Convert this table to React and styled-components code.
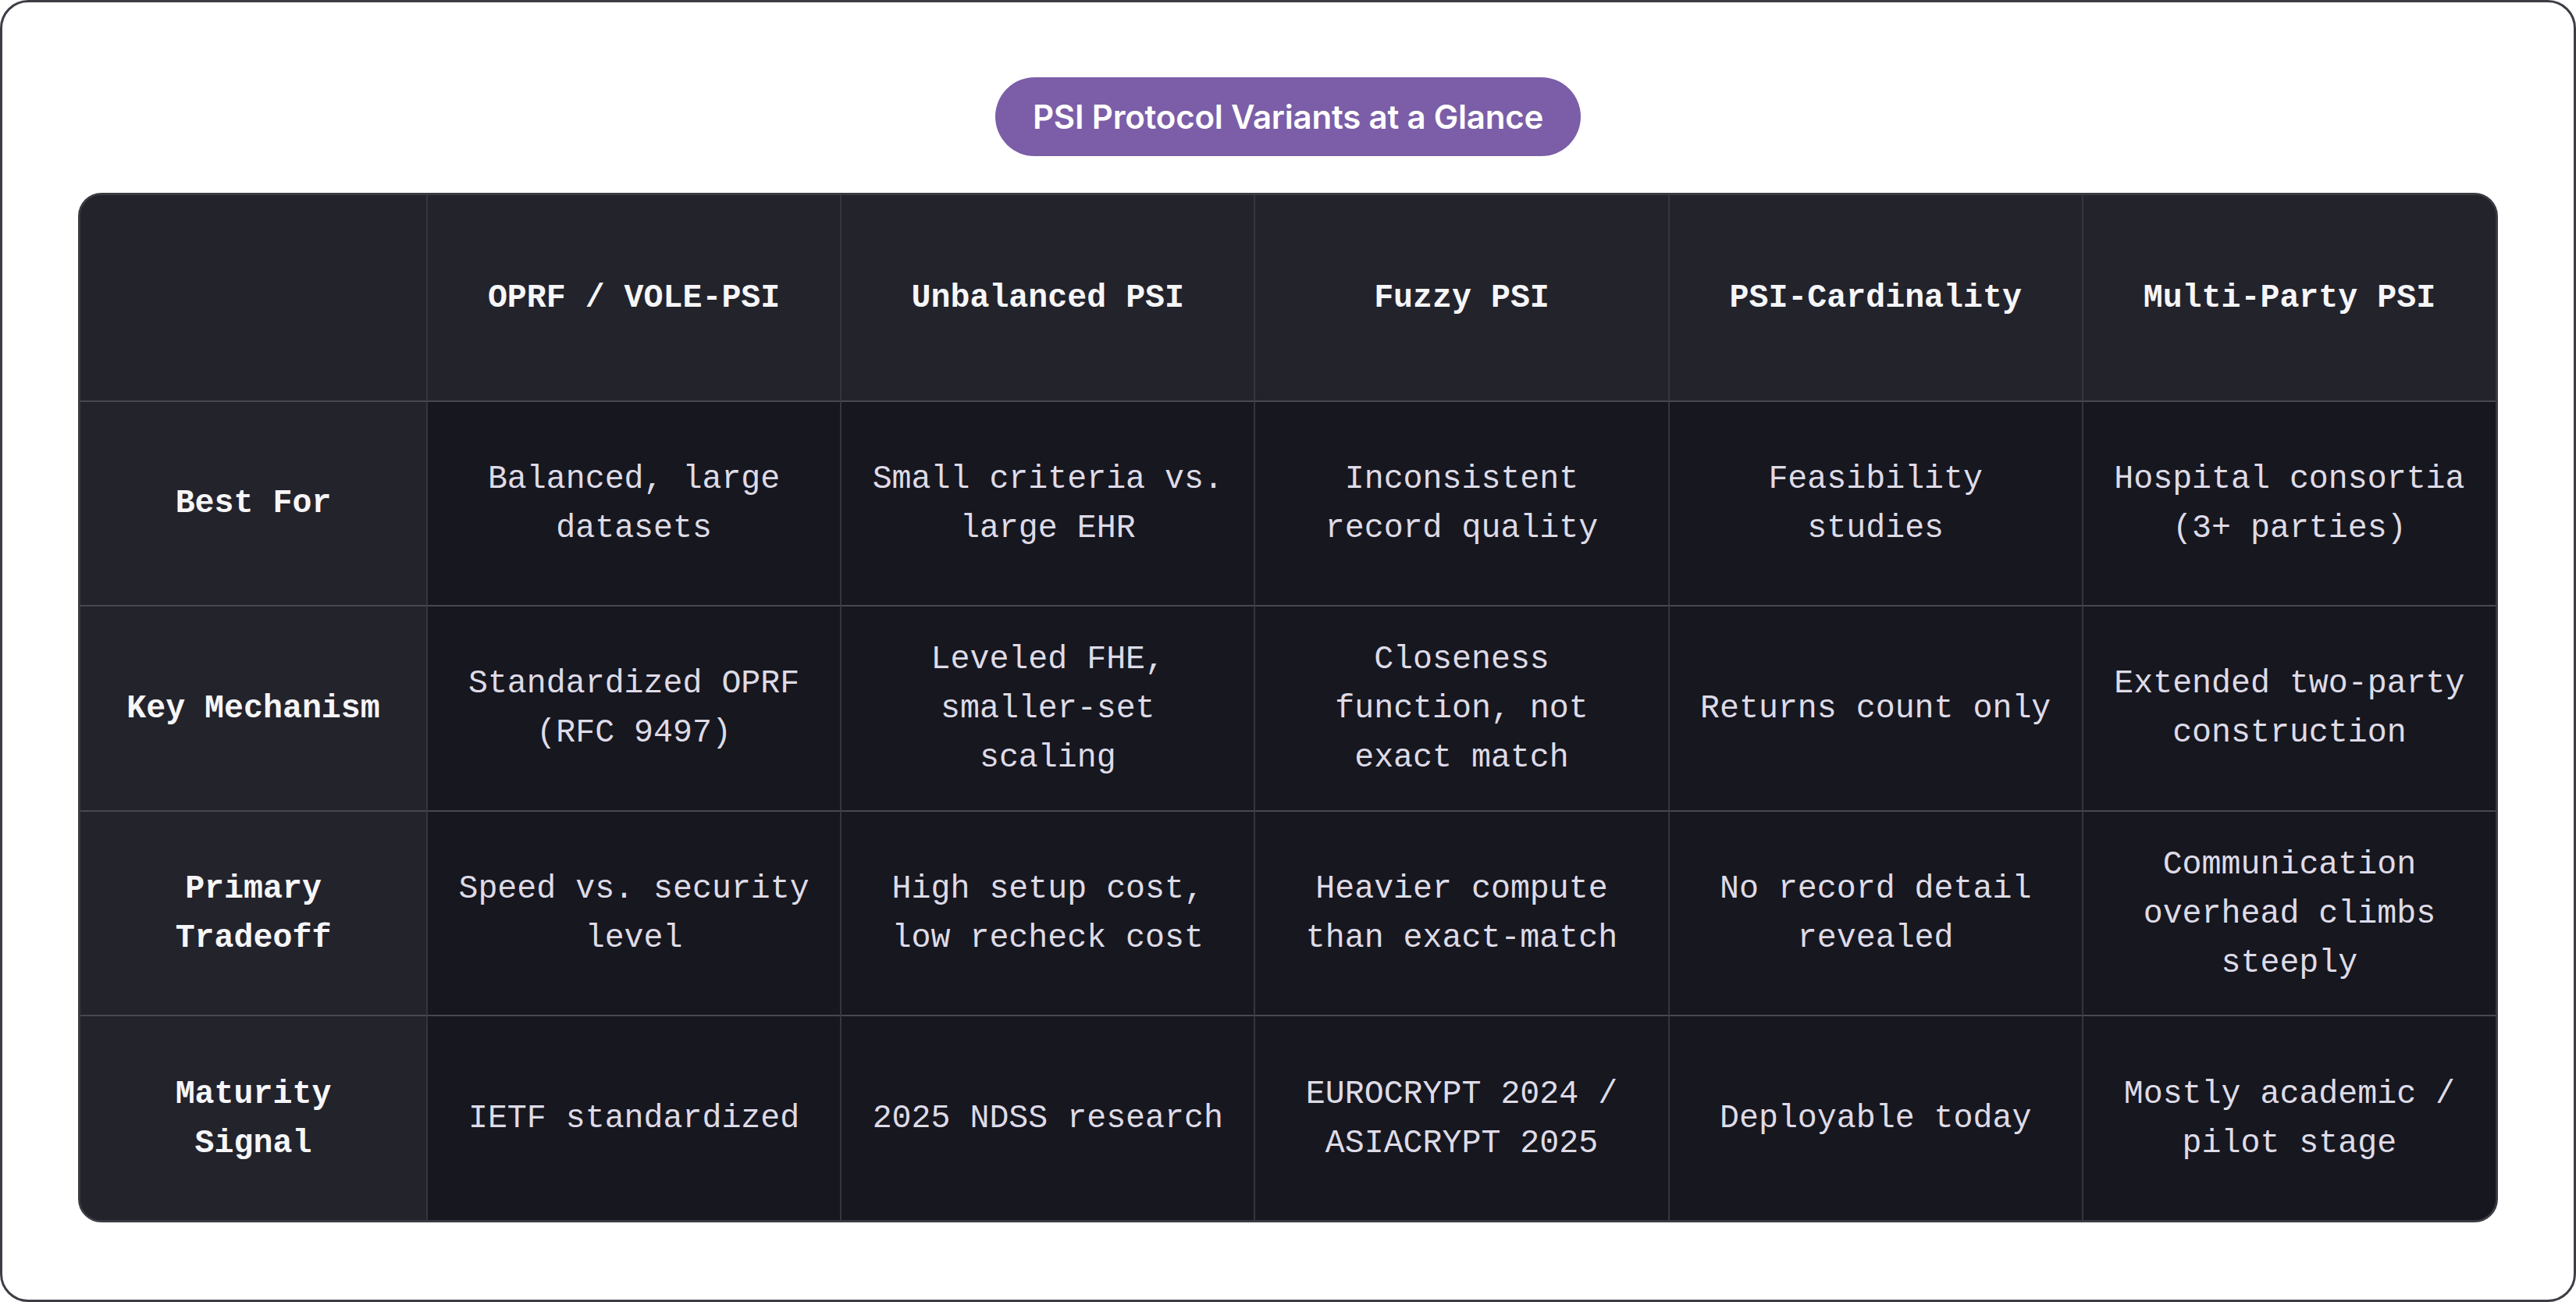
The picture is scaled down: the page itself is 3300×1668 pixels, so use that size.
import React from "react";
import styled, { createGlobalStyle } from "styled-components";

const GlobalStyle = createGlobalStyle`
  html, body { margin: 0; padding: 0; background: #ffffff; }
  * { box-sizing: border-box; }
`;

const Frame = styled.div`
  width: 3300px;
  height: 1668px;
  border: 3px solid #3d3d45;
  border-radius: 36px;
  background: #ffffff;
  padding: 96px 97px 99px;
  display: flex;
  flex-direction: column;
  align-items: center;
  gap: 47px;
`;

const TitlePill = styled.div`
  height: 101px;
  padding: 0 48px;
  display: inline-flex;
  align-items: center;
  justify-content: center;
  border-radius: 999px;
  background: #7b5ea7;
  color: #ffffff;
  font-family: Inter, "Noto Sans", sans-serif;
  font-weight: 600;
  font-size: 42px;
  letter-spacing: -0.2px;
  white-space: nowrap;
`;

const Table = styled.div`
  width: 100%;
  flex: 1;
  display: grid;
  grid-template-columns: 443px repeat(5, 1fr);
  grid-template-rows: repeat(5, 1fr);
  border: 3px solid #3a3a42;
  border-radius: 30px;
  overflow: hidden;
  background: #17171f;
`;

const Cell = styled.div`
  display: flex;
  align-items: center;
  justify-content: center;
  text-align: center;
  padding: 0 ${(p) => (p.$label ? "36px" : "34px")};
  background: ${(p) => (p.$head || p.$label ? "#23232c" : "#17171f")};
  color: ${(p) => (p.$head || p.$label ? "#f6f6f8" : "#dedbe7")};
  font-family: "Liberation Mono", "DejaVu Sans Mono", monospace;
  font-size: 41.6px;
  line-height: 63px;
  font-weight: ${(p) => (p.$head || p.$label ? 700 : 400)};
  border-left: ${(p) => (p.$label ? "none" : "2px solid #35353e")};
  border-top: ${(p) => (p.$head ? "none" : "2px solid #48484f")};
`;

const columns = [
  "OPRF / VOLE-PSI",
  "Unbalanced PSI",
  "Fuzzy PSI",
  "PSI-Cardinality",
  "Multi-Party PSI",
];

const rows = [
  {
    label: "Best For",
    cells: [
      "Balanced, large datasets",
      "Small criteria vs. large EHR",
      "Inconsistent record quality",
      "Feasibility studies",
      "Hospital consortia (3+ parties)",
    ],
  },
  {
    label: "Key Mechanism",
    cells: [
      "Standardized OPRF (RFC 9497)",
      "Leveled FHE, smaller-set scaling",
      "Closeness function, not exact match",
      "Returns count only",
      "Extended two-party construction",
    ],
  },
  {
    label: "Primary Tradeoff",
    cells: [
      "Speed vs. security level",
      "High setup cost, low recheck cost",
      "Heavier compute than exact-match",
      "No record detail revealed",
      "Communication overhead climbs steeply",
    ],
  },
  {
    label: "Maturity Signal",
    cells: [
      "IETF standardized",
      "2025 NDSS research",
      "EUROCRYPT 2024 / ASIACRYPT 2025",
      "Deployable today",
      "Mostly academic / pilot stage",
    ],
  },
];

export default function App() {
  return (
    <>
      <GlobalStyle />
      <Frame>
        <TitlePill>PSI Protocol Variants at a Glance</TitlePill>
        <Table>
          <Cell $head $label />
          {columns.map((c) => (
            <Cell key={c} $head>
              {c}
            </Cell>
          ))}
          {rows.map((r) => (
            <React.Fragment key={r.label}>
              <Cell $label>{r.label}</Cell>
              {r.cells.map((t, i) => (
                <Cell key={i}>{t}</Cell>
              ))}
            </React.Fragment>
          ))}
        </Table>
      </Frame>
    </>
  );
}
